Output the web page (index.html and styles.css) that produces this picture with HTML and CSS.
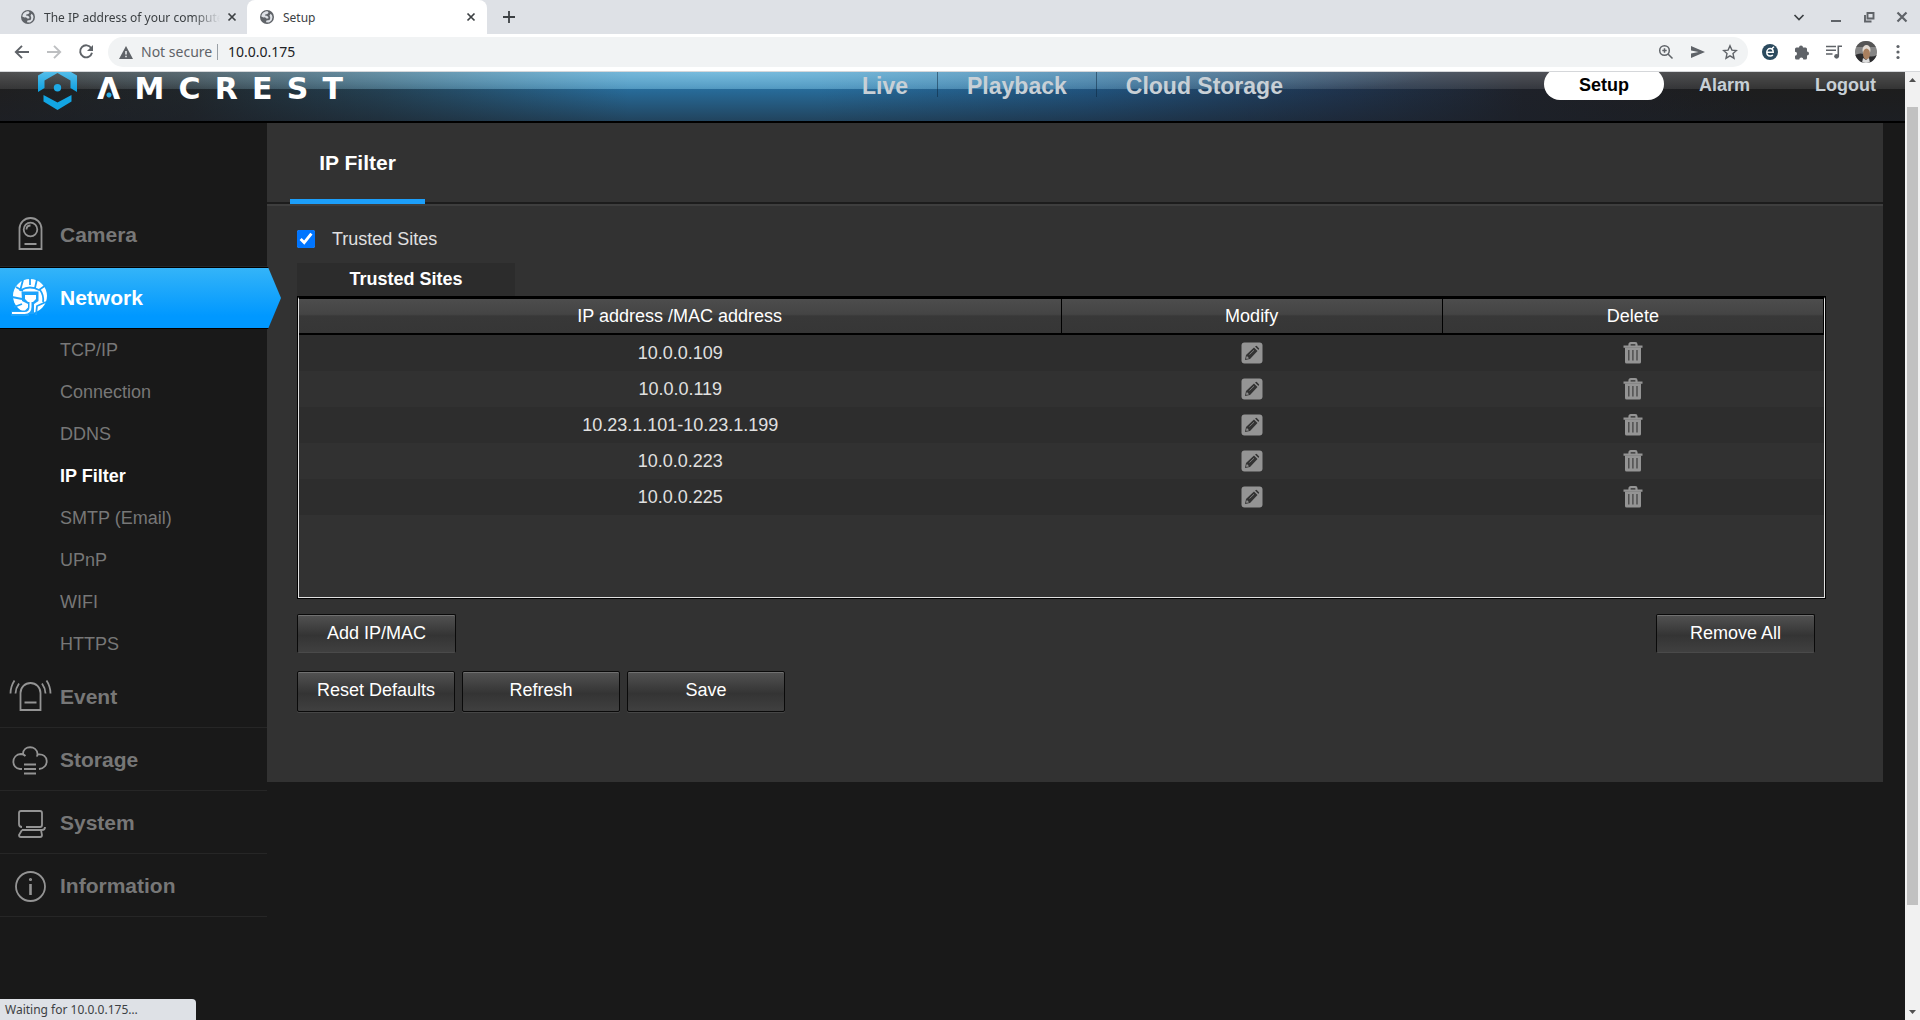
FILE: index.html
```html
<!DOCTYPE html>
<html lang="en">
<head>
<meta charset="utf-8">
<title>Setup</title>
<link rel="stylesheet" href="styles.css">
</head>
<body>
<svg class="defs" aria-hidden="true">
  <symbol id="globe" viewBox="0 0 14 14"><circle cx="7" cy="7" r="7" fill="#5f6368"/><path d="M7.6 1.2C4 1 1.600 3.400 1.300 6.600L3.500 7.500 5 7.300 6.400 8.400 8.200 8.600 8.400 7 6.900 5.700 5.300 5.700 5.200 4.400 7.300 4 8.600 2.700z" fill="#dee1e6"/><path d="M9.500 5.200l1.200-1.400 1.300 1.400.5 2-.8 3-1.900 1.900L8.600 12.500 6 12.300l.4-1.800 3.200-.6.700-2z" fill="#dee1e6"/></symbol>
  <symbol id="cross" viewBox="0 0 10 10"><path d="M1.500 1.500l7 7M8.500 1.500l-7 7" stroke="#3c4043" stroke-width="1.700"/></symbol>
  <symbol id="pencil" viewBox="0 0 22 22"><rect x="0.500" y="0.500" width="21" height="21" rx="3" fill="#949494"/><path d="M4 18l1-5L13 5.500 16.500 9 9 17z" fill="#333"/><path d="M14 4.500l1.500-.7 2.700 2.700-.7 1.500z" fill="#333"/><path d="M5.500 16.500l.4-2 1.600 1.600zM8.500 12.500l4.500-4.300" fill="#949494" stroke="#949494" stroke-width=".7"/></symbol>
  <symbol id="trash" viewBox="0 0 20 22"><path d="M6.500 4V2.500Q6.500 1.200 7.800 1.200h4.400q1.300 0 1.300 1.300V4M.5 4.700h19" fill="none" stroke="#949494" stroke-width="2.200"/><path d="M2 5.500h16V20q0 1.500-1.500 1.500h-13Q2 21.500 2 20z" fill="#949494"/><path d="M5.800 8v10.500M9.900 8v10.500M14 8v10.500" stroke="#444" stroke-width="1.300"/></symbol>
</svg>

<div class="tabstrip">
  <div class="tab"><svg class="fav"><use href="#globe"/></svg><span class="tab-title fade">The IP address of your computer</span><button class="tab-close" aria-label="Close tab"><svg><use href="#cross"/></svg></button></div>
  <div class="tab active"><svg class="fav"><use href="#globe"/></svg><span class="tab-title">Setup</span><button class="tab-close" aria-label="Close tab"><svg><use href="#cross"/></svg></button></div>
  <button class="new-tab" aria-label="New tab"><svg viewBox="0 0 12 12"><path d="M6 0v12M0 6h12" stroke="#3c4043" stroke-width="1.800"/></svg></button>
  <div class="window-controls">
    <button aria-label="Search tabs"><svg viewBox="0 0 12 12"><path d="M1.500 4L6 8.500 10.500 4" fill="none" stroke="#3c4043" stroke-width="1.700"/></svg></button>
    <button aria-label="Minimize"><svg viewBox="0 0 12 12"><path d="M1 10h10" stroke="#5f6368" stroke-width="2"/></svg></button>
    <button aria-label="Restore"><svg viewBox="0 0 12 12"><path d="M4.500 2h6v5.500h-6zM2 4v6.500h6.500" fill="none" stroke="#5f6368" stroke-width="1.900"/></svg></button>
    <button aria-label="Close window"><svg viewBox="0 0 12 12"><path d="M1.500 1.500l9 9M10.500 1.500l-9 9" stroke="#5f6368" stroke-width="2.200"/></svg></button>
  </div>
</div>

<div class="toolbar">
  <div class="nav-buttons">
    <button aria-label="Back"><svg viewBox="0 0 16 16"><path d="M15 8H2.500M8 1.800L1.800 8 8 14.200" fill="none" stroke="#5f6368" stroke-width="1.900"/></svg></button>
    <button aria-label="Forward"><svg viewBox="0 0 16 16"><path d="M1 8h12.500M8 1.800L14.200 8 8 14.200" fill="none" stroke="#bdbfc1" stroke-width="1.900"/></svg></button>
    <button aria-label="Reload"><svg viewBox="0 0 16 16"><path d="M13.300 4.200A6 6 0 1 0 14 8.800" fill="none" stroke="#5f6368" stroke-width="1.900"/><path d="M15 1v6H9z" fill="#5f6368"/></svg></button>
  </div>
  <div class="omnibox">
    <svg class="warn" viewBox="0 0 14 13"><path d="M7 0l7 13H0z" fill="#5f6368"/><path d="M7 5v3.500M7 9.700v1.600" stroke="#f1f3f4" stroke-width="1.500"/></svg>
    <span class="insecure">Not secure</span>
    <input class="url" type="text" value="10.0.0.175" aria-label="Address">
    <button aria-label="Zoom"><svg viewBox="0 0 16 16"><circle cx="6.500" cy="6.500" r="4.800" fill="none" stroke="#5f6368" stroke-width="1.500"/><path d="M10 10l4.500 4.500M4.300 6.500h4.400M6.500 4.300v4.400" stroke="#5f6368" stroke-width="1.500"/></svg></button>
    <button aria-label="Send"><svg viewBox="0 0 16 16"><path d="M1 2l14 6-14 6V9.500L8.500 8 1 6.500z" fill="#5f6368"/></svg></button>
    <button aria-label="Bookmark"><svg viewBox="0 0 16 16"><path d="M8 1.800l1.900 4.300 4.600.4-3.500 3.100 1 4.600L8 11.800l-4 2.400 1-4.600L1.500 6.500l4.600-.4z" fill="none" stroke="#5f6368" stroke-width="1.400"/></svg></button>
  </div>
  <div class="tools">
    <button aria-label="Extension"><svg viewBox="0 0 16 16"><circle cx="8" cy="8" r="8" fill="#2b4a5e"/><path d="M4.800 8.300h6.400C11.200 6.200 9.900 4.600 8.100 4.600S4.800 6.200 4.800 8.300s1.400 3.700 3.400 3.700q1.600 0 2.700-1M10.300 4.300l1.700-1.500" fill="none" stroke="#fff" stroke-width="1.500"/></svg></button>
    <button aria-label="Extensions"><svg viewBox="0 0 16 16"><path d="M1 5q0-1.500 1.500-1.500H5A2 2 0 0 1 9 3.500h2.500Q13 3.500 13 5v2.500a2 2 0 0 1 0 4V14q0 1.500-1.500 1.500H9.300a2 2 0 0 0-4 0H2.500Q1 15.500 1 14v-2.300a2 2 0 0 0 0-4z" fill="#5f6368"/></svg></button>
    <button aria-label="Media"><svg viewBox="0 0 16 16"><path d="M0 2.500h10M0 6.200h10M0 10h6.500M12.300 12.500V2.200H16" fill="none" stroke="#5f6368" stroke-width="1.600"/><circle cx="10.600" cy="12.300" r="2.400" fill="#5f6368"/></svg></button>
    <button aria-label="Profile"><svg class="avatar" viewBox="0 0 22 22"><clipPath id="round"><circle cx="11" cy="11" r="11"/></clipPath><g clip-path="url(#round)"><path d="M0 0h22v22H0z" fill="#858585"/><path d="M0 0h22v6H0z" fill="#555"/><path d="M0 14q6-3 11 0t11 0v8H0z" fill="#2c2c2e"/><ellipse cx="11.500" cy="9" rx="4" ry="5" fill="#e2dad2"/><ellipse cx="11.500" cy="13" rx="3.500" ry="5.500" fill="#a9805f"/><path d="M8 17l3 2 3-2 1 5H7z" fill="#ddd"/></g></svg></button>
    <button aria-label="Menu"><svg viewBox="0 0 16 16"><g fill="#5f6368"><circle cx="8" cy="2.500" r="1.600"/><circle cx="8" cy="8" r="1.600"/><circle cx="8" cy="13.500" r="1.600"/></g></svg></button>
  </div>
</div>

<div class="viewport">
  <div class="page">
    <header class="banner">
      <div class="brand" role="img" aria-label="Amcrest">
        <svg class="brand-mark" viewBox="0 0 39 38"><defs><linearGradient id="cy" x2="0" y2="1"><stop offset="0" stop-color="#55bdea"/><stop offset="1" stop-color="#0a9fe0"/></linearGradient></defs><path d="M0 20V3.500L6 0h27l6 3.500V20l-6.500-4V8.500L19.500 1 6.500 8.500V16z" fill="url(#cy)"/><path d="M5.500 23l14 7.500 14-7.500v6.500L19.500 38l-14-8.500z" fill="#12a5e3"/><circle cx="19.500" cy="15.700" r="3.700" fill="#1eaae6"/></svg>
        <div class="wordmark"><span class="first">Λ</span><span>M</span><span>C</span><span>R</span><span>E</span><span>S</span><span>T</span></div>
      </div>
      <nav class="main-nav"><a href="#">Live</a><a href="#">Playback</a><a href="#">Cloud Storage</a></nav>
      <nav class="user-nav"><a href="#" class="current">Setup</a><a href="#">Alarm</a><a href="#">Logout</a></nav>
    </header>
    <div class="columns">
      <aside class="sidebar">
        <a href="#" class="group"><svg viewBox="0 0 44 44"><path d="M10.500 36V16a11 11 0 0 1 22 0v20z"/><circle cx="21.500" cy="16.500" r="6.800"/><path d="M17.500 16.500q0-4 4-4M15.500 31h12"/></svg>Camera</a>
        <a href="#" class="group open"><svg viewBox="0 0 44 44"><circle cx="21" cy="20" r="17" fill="#fff" stroke="none"/><g stroke="#1ea3fb" stroke-width="1.800"><path d="M21 2v7M7 11l7 4M12 14q9-5 18 0l7-5M14 4l-3 11M28 3l-2 9M3 21l10 2M31 14q4 5 3 12M5 31l8-3M27 39l1-9 9-4"/></g><path d="M12.500 15.500h17v9.500l-4.500 3v10h-6v-10l-6-3z" fill="#1ea3fb" stroke="none"/><path d="M2 34.500h14l4-4V40H2z" fill="#1ea3fb" stroke="none"/><path d="M16 19h11v4l-3 3h-5l-3-3z" fill="#fff" stroke="none"/><path d="M21.500 25v6q0 6-6 6H3" stroke="#fff" stroke-width="2"/></svg>Network</a>
        <ul class="sub">
          <li><a href="#">TCP/IP</a></li><li><a href="#">Connection</a></li><li><a href="#">DDNS</a></li><li><a href="#" class="current">IP Filter</a></li><li><a href="#">SMTP (Email)</a></li><li><a href="#">UPnP</a></li><li><a href="#">WIFI</a></li><li><a href="#">HTTPS</a></li>
        </ul>
        <a href="#" class="group"><svg viewBox="0 0 44 44"><path d="M11.500 35V18a10 10 0 0 1 20 0v17zM15.500 27.500h12M6.500 18.500q0-5 3.500-10M1.500 18.500q0-7 4-13M36.500 18.500q0-5-3.500-10M41.500 18.500q0-7-4-13"/></svg>Event</a>
        <a href="#" class="group"><svg viewBox="0 0 44 44"><path d="M13 31h-2C2 30.500 2 16.500 12 16c2 0 3 .5 4.500 2M14 16c0-9 14-9 14.500 0q0 2-1 2.500M28.500 16.500c12-2 12 14 1.500 14.500M15 26.500h12M15 31h12M15 35.500h12"/></svg>Storage</a>
        <a href="#" class="group"><svg viewBox="0 0 44 44"><path d="M13 26q-3 0-3-3V12q0-2 2-2h19q2 0 2 2v12q0 2-2 2H17M13 29h20M36 26q0 3-3 3M13 29l-3 5q0 2 2 2h19q2 0 2-2l-1-5"/></svg>System</a>
        <a href="#" class="group"><svg viewBox="0 0 44 44"><circle cx="21.500" cy="22.500" r="14.500"/><path d="M21.500 20v11" stroke-width="2.600"/><circle cx="21.500" cy="15.500" r=".7"/></svg>Information</a>
      </aside>
      <main class="panel">
        <div class="tabs"><h1 class="tab-label">IP Filter</h1></div>
        <div class="content">
          <label class="trusted"><input type="checkbox" checked>Trusted Sites</label>
          <h2 class="list-tab">Trusted Sites</h2>
          <div class="list">
            <table>
              <thead><tr><th class="addr">IP address /MAC address</th><th>Modify</th><th>Delete</th></tr></thead>
              <tbody>
                <tr><td>10.0.0.109</td><td><button aria-label="Modify"><svg><use href="#pencil"/></svg></button></td><td><button aria-label="Delete"><svg class="bin"><use href="#trash"/></svg></button></td></tr>
                <tr><td>10.0.0.119</td><td><button aria-label="Modify"><svg><use href="#pencil"/></svg></button></td><td><button aria-label="Delete"><svg class="bin"><use href="#trash"/></svg></button></td></tr>
                <tr><td>10.23.1.101-10.23.1.199</td><td><button aria-label="Modify"><svg><use href="#pencil"/></svg></button></td><td><button aria-label="Delete"><svg class="bin"><use href="#trash"/></svg></button></td></tr>
                <tr><td>10.0.0.223</td><td><button aria-label="Modify"><svg><use href="#pencil"/></svg></button></td><td><button aria-label="Delete"><svg class="bin"><use href="#trash"/></svg></button></td></tr>
                <tr><td>10.0.0.225</td><td><button aria-label="Modify"><svg><use href="#pencil"/></svg></button></td><td><button aria-label="Delete"><svg class="bin"><use href="#trash"/></svg></button></td></tr>
              </tbody>
            </table>
          </div>
          <div class="list-actions"><button class="btn flat">Add IP/MAC</button><button class="btn flat">Remove All</button></div>
          <div class="form-actions"><button class="btn">Reset Defaults</button><button class="btn">Refresh</button><button class="btn">Save</button></div>
        </div>
      </main>
    </div>
  </div>
  <div class="scrollbar" aria-hidden="true">
    <svg viewBox="0 0 15 16"><path d="M4 10l3.500-4L11 10z" fill="#505050"/></svg>
    <div class="track"><div class="thumb"></div></div>
    <svg viewBox="0 0 15 16"><path d="M4 6l3.500 4L11 6z" fill="#505050"/></svg>
  </div>
</div>
<div class="status">Waiting for 10.0.0.175…</div>
</body>
</html>
```
FILE: styles.css
```css
* { box-sizing: border-box; }

body {
  margin: 0;
  height: 100vh;
  display: flex;
  flex-direction: column;
  overflow: hidden;
  background: #191919;
  color: #e0e0e0;
  font: 18px/20px "Liberation Sans", Arial, sans-serif;
}

a { color: inherit; text-decoration: none; }
button { padding: 0; border: 0; background: none; font: inherit; color: inherit; }
svg { display: block; }
.defs { position: absolute; width: 0; height: 0; }

/* Browser frame */
.tabstrip, .toolbar, .status { font: 12px/16px "Noto Sans", sans-serif; color: #3c4043; }

.tabstrip { display: flex; flex: none; height: 34px; background: #dee1e6; }
.tab { display: flex; align-items: center; width: 240px; padding: 0 11px 0 13px; }
.tab:first-child { width: 247px; padding: 0 10px 0 21px; }
.tab.active { background: #fff; border-radius: 8px 8px 0 0; }
.fav { flex: none; width: 14px; height: 14px; margin-right: 9px; }
.tab-title { flex: 1; padding-top: 1px; overflow: hidden; white-space: nowrap; }
.fade { -webkit-mask-image: linear-gradient(90deg, #000 85%, transparent); mask-image: linear-gradient(90deg, #000 85%, transparent); }
.tab-close { margin-left: 7px; }
.tab-close svg { width: 10px; height: 10px; }
.new-tab { padding: 0 16px; }
.new-tab svg { width: 12px; height: 12px; }
.window-controls { display: flex; margin-left: auto; padding-right: 2px; }
.window-controls button { width: 33px; display: grid; place-items: center; }
.window-controls button:first-child { margin-right: 4px; }
.window-controls svg { width: 12px; height: 12px; }

.toolbar { display: flex; flex: none; align-items: center; height: 38px; padding-bottom: 1px; border-bottom: 1px solid #d5d7da; background: #fff; }
.toolbar button { width: 32px; height: 28px; display: grid; place-items: center; }
.toolbar svg { width: 16px; height: 16px; }
.nav-buttons { display: flex; padding: 0 6px; }
.omnibox { flex: 1; display: flex; align-items: center; height: 30px; padding: 0 2px 0 11px; border-radius: 15px; background: #f1f3f4; font-size: 14px; }
.omnibox .warn { width: 14px; height: 13px; margin-right: 8px; }
.insecure { width: 77px; border-right: 1px solid #9aa0a6; color: #5f6368; }
.url { flex: 1; padding: 0 10px; border: 0; background: none; font: inherit; color: #202124; }
.tools { display: flex; padding: 0 6px; }
.toolbar .avatar { width: 22px; height: 22px; }

.viewport { flex: 1; display: flex; min-height: 0; }
.page { flex: 1; min-width: 0; }

.scrollbar { display: flex; flex-direction: column; width: 15px; background: #f1f1f1; }
.scrollbar svg { width: 15px; height: 16px; }
.track { flex: 1; padding: 19px 2px 0; }
.thumb { height: 89%; background: #c1c1c1; }

.status { position: fixed; left: 0; bottom: 0; width: 196px; height: 21px; padding: 3px 5px; border-top-right-radius: 4px; background: #dee1e6; }

/* Camera page header */
.banner {
  display: flex;
  height: 51px;
  overflow: hidden;
  border-bottom: 2px solid #000;
  background:
    linear-gradient(rgba(255,255,255,.22), rgba(255,255,255,.1)) 0 0 / 100% 17px no-repeat,
    radial-gradient(ellipse 720px 36px at 38% 0, rgba(105,200,240,.65), transparent) 0 0 / 100% 17px no-repeat,
    linear-gradient(transparent 30%, rgba(28,32,40,.55)),
    linear-gradient(90deg, #1f1f20 0, #20262a 10%, #244255 20%, #286f9f 33%, #286f9f 43%, #215682 57%, #1f3550 70%, #1e2129 80%, #1d1d1d 92%);
  color: #c8d0d6;
  font-weight: bold;
}
.brand { display: flex; width: 862px; padding-left: 38px; }
.brand-mark { width: 39px; height: 38px; }
.wordmark { display: flex; justify-content: space-between; width: 246px; height: 34px; margin-left: 20px; color: #fff; font: bold 30px/34px "DejaVu Sans", sans-serif; }
.first { background: radial-gradient(circle at 12px 23px, #2aaee8 2px, transparent 3px); }
.main-nav { display: flex; font-size: 23px; line-height: 28px; }
.main-nav a { height: 25px; padding: 0 29px; border-right: 1px solid rgba(10,35,60,.5); }
.main-nav a:first-child { padding-left: 0; }
.main-nav a:last-child { border: 0; }
.user-nav { display: flex; gap: 65px; margin-left: auto; padding-right: 29px; line-height: 26px; }
.user-nav .current { width: 120px; height: 32px; margin: -4px -30px 0 0; border-radius: 16px; background: #fff; color: #000; text-align: center; line-height: 34px; }

/* Sidebar */
.columns { display: flex; align-items: flex-start; }
.sidebar { flex: none; width: 267px; padding-top: 81px; color: #777; }
.group { display: flex; align-items: center; height: 63px; padding-left: 9px; border-bottom: 1px solid #262626; font-size: 21px; font-weight: bold; }
.sub ~ .group { padding-top: 2px; }
.group svg { width: 44px; height: 44px; margin-right: 7px; fill: none; stroke: #949494; stroke-width: 1.8; }
.group.open { position: relative; width: 281px; height: 62px; border-top: 1px solid #000; border-bottom: 1px solid #000; color: #fff; background: linear-gradient(#34b4f8, #0098ff 80%); clip-path: polygon(0 0, 268px 0, 281px 50%, 268px 100%, 0 100%); }
.sub { margin: 0; padding: 0 0 0 60px; list-style: none; }
.sub a { display: block; line-height: 42px; }
.sub .current { color: #fff; font-weight: bold; }

/* Settings panel */
.panel { flex: 1; min-width: 0; padding-bottom: 70px; margin-right: 22px; background: #323232; }
.tabs { display: flex; height: 83px; padding-left: 23px; border-bottom: 2px solid #3e3e3e; box-shadow: inset 0 -2px #1c1c1c; }
.tab-label { width: 135px; margin: 0; border-bottom: 5px solid #1c9ffa; color: #fff; font-size: 21px; line-height: 80px; text-align: center; }
.content { padding: 24px 57px 0 30px; }
.trusted { display: flex; align-items: center; gap: 17px; height: 18px; line-height: 22px; }
.trusted input { width: 18px; height: 18px; margin: 0; accent-color: #0075ff; }
.list-tab { width: 218px; margin: 15px 0 0; background: #2c2c2c; color: #fff; font-size: 18px; line-height: 33px; text-align: center; }
.list { min-height: 301px; margin: 1px; border: 1px solid #e0e0e0; border-top: 2px solid #000; outline: 1px solid #000; }
table { width: 100%; border-spacing: 0; table-layout: fixed; background: #2d2d2d; }
th { height: 36px; padding: 0; border: 0 solid #000; border-right-width: 1px; border-bottom-width: 2px; background: linear-gradient(#4d4d4d, #444 45%, #383838 50%, #363636); color: #fff; font-weight: normal; }
.addr { width: 50%; }
td { height: 36px; padding: 0; text-align: center; }
tbody tr:nth-child(even) { background: #313131; }
td button { display: block; margin: 0 auto; }
td svg { width: 22px; height: 22px; }
td .bin { width: 20px; }
.list-actions { display: flex; justify-content: space-between; padding: 15px 11px 18px 0; }
.form-actions { display: flex; gap: 7px; }
.btn { width: 158px; height: 41px; padding-bottom: 4px; border: 1px solid #0a0a0a; border-radius: 2px; box-shadow: inset 0 1px #707070, 0 1px #464646; background: linear-gradient(#525252, #343434 55%, #404040); color: #fff; }
.btn.flat { width: 159px; height: 39px; padding-bottom: 2px; border-bottom-color: #4a4a4a; box-shadow: inset 0 1px #707070; }
```
